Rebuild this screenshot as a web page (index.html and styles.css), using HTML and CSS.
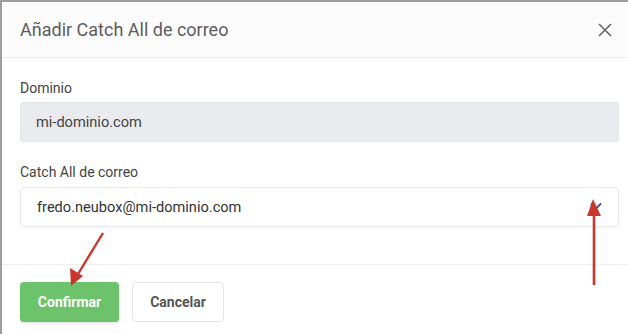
FILE: index.html
```html
<!DOCTYPE html>
<html lang="es">
<head>
  <meta charset="UTF-8"/>
  <meta name="viewport" content="width=device-width,initial-scale=1.0"/>
  <title>Añadir Catch All de correo</title>
  <link rel="stylesheet" href="styles.css">
</head>
<body>

  <div class="modal">
    <!-- Header -->
    <div class="modal-header">
      <h2 class="modal-title">Añadir Catch All de correo</h2>
      <button class="modal-close" aria-label="Cerrar">
        <svg width="14" height="14" viewBox="0 0 14 14">
          <path d="M1 1 L13 13 M13 1 L1 13" stroke="#666" stroke-width="1.6" fill="none"/>
        </svg>
      </button>
    </div>

    <!-- Body -->
    <div class="modal-body">
      <div class="form-group">
        <label for="domain">Dominio</label>
        <input type="text" id="domain" class="field" value="mi-dominio.com" disabled/>
      </div>
      <div class="form-group">
        <label for="catchall">Catch All de correo</label>
        <div class="select">
          <span>fredo.neubox@mi-dominio.com</span>
          <svg class="chevron" width="12" height="8" viewBox="0 0 12 8">
            <path d="M1 1.5 L6 6.5 L11 1.5" stroke="#3a4a8c" stroke-width="1.8" fill="none"/>
          </svg>
        </div>
      </div>
    </div>

    <!-- Footer -->
    <div class="modal-footer">
      <button class="btn btn-confirm">Confirmar</button>
      <button class="btn btn-cancel">Cancelar</button>
    </div>

    <!-- annotation arrows -->
    <svg class="arrows" width="628" height="334" viewBox="0 0 628 334">
      <line x1="103" y1="233" x2="78" y2="274" stroke="#c8372d" stroke-width="2.4"/>
      <polygon points="71,286 70,268 83,276" fill="#c8372d"/>
      <line x1="594" y1="285" x2="594" y2="212" stroke="#c8372d" stroke-width="2.6"/>
      <polygon points="593,199 587,216 601,216" fill="#c8372d"/>
    </svg>
  </div>

</body>
</html>
```

FILE: styles.css
```css
* { margin:0; padding:0; box-sizing:border-box; }
html, body {
  height:100vh; overflow:hidden;
  font-family:Roboto,'Liberation Sans',sans-serif;
  background:#fff; color:#333;
}

.modal {
  position:relative;
  height:100vh;
  border-top:2px solid #9e9e9e;
  border-left:2px solid #9e9e9e;
}

/* ─── HEADER ───────────────────────── */
.modal-header {
  height:56px;
  display:flex; align-items:center; justify-content:space-between;
  padding:0 16px 0 18px;
  background:#fcfcfc;
  border-bottom:1px solid #ebebeb;
}
.modal-title {
  font-size:18px; font-weight:400;
  color:#5c5c5c;
}
.modal-close {
  background:none; border:none; cursor:pointer;
  display:flex; padding:0;
}

/* ─── BODY ─────────────────────────── */
.modal-body {
  padding:20px 9px 17px 18px;
  border-bottom:1px solid #eeeeee;
}
.form-group { margin-bottom:20px; }
.form-group label {
  display:block;
  font-size:14px; line-height:20px;
  color:#444;
  margin-bottom:4px;
}
.field {
  width:100%; height:40px;
  padding:0 15px;
  font-family:inherit; font-size:14.6px;
  color:#444;
  background:#e9ebee;
  border:1px solid #e2e4e7;
  border-radius:3px;
}
.select {
  height:40px;
  margin-top:5px;
  display:flex; align-items:center; justify-content:space-between;
  padding:0 16px;
  font-size:14.6px; color:#333;
  border:1px solid #e6e6e6;
  border-radius:4px;
  box-shadow:0 1px 2px rgba(0,0,0,0.04);
}
.select .chevron { margin-top:-2px; }

/* ─── FOOTER ───────────────────────── */
.modal-footer {
  display:flex; gap:13px;
  padding:17px 18px;
}
.btn {
  height:40px;
  font-family:inherit; font-size:14px; font-weight:700;
  border-radius:4px;
  cursor:pointer;
}
.btn-confirm {
  width:99px;
  background:#6cc36b; color:#fff;
  border:none;
  box-shadow:0 1px 3px rgba(0,0,0,0.15);
}
.btn-cancel {
  width:92px;
  background:#fff; color:#555;
  border:1px solid #e6e6e6;
}

/* annotation overlay */
.arrows {
  position:absolute; top:-2px; left:-2px;
  pointer-events:none;
}
```
